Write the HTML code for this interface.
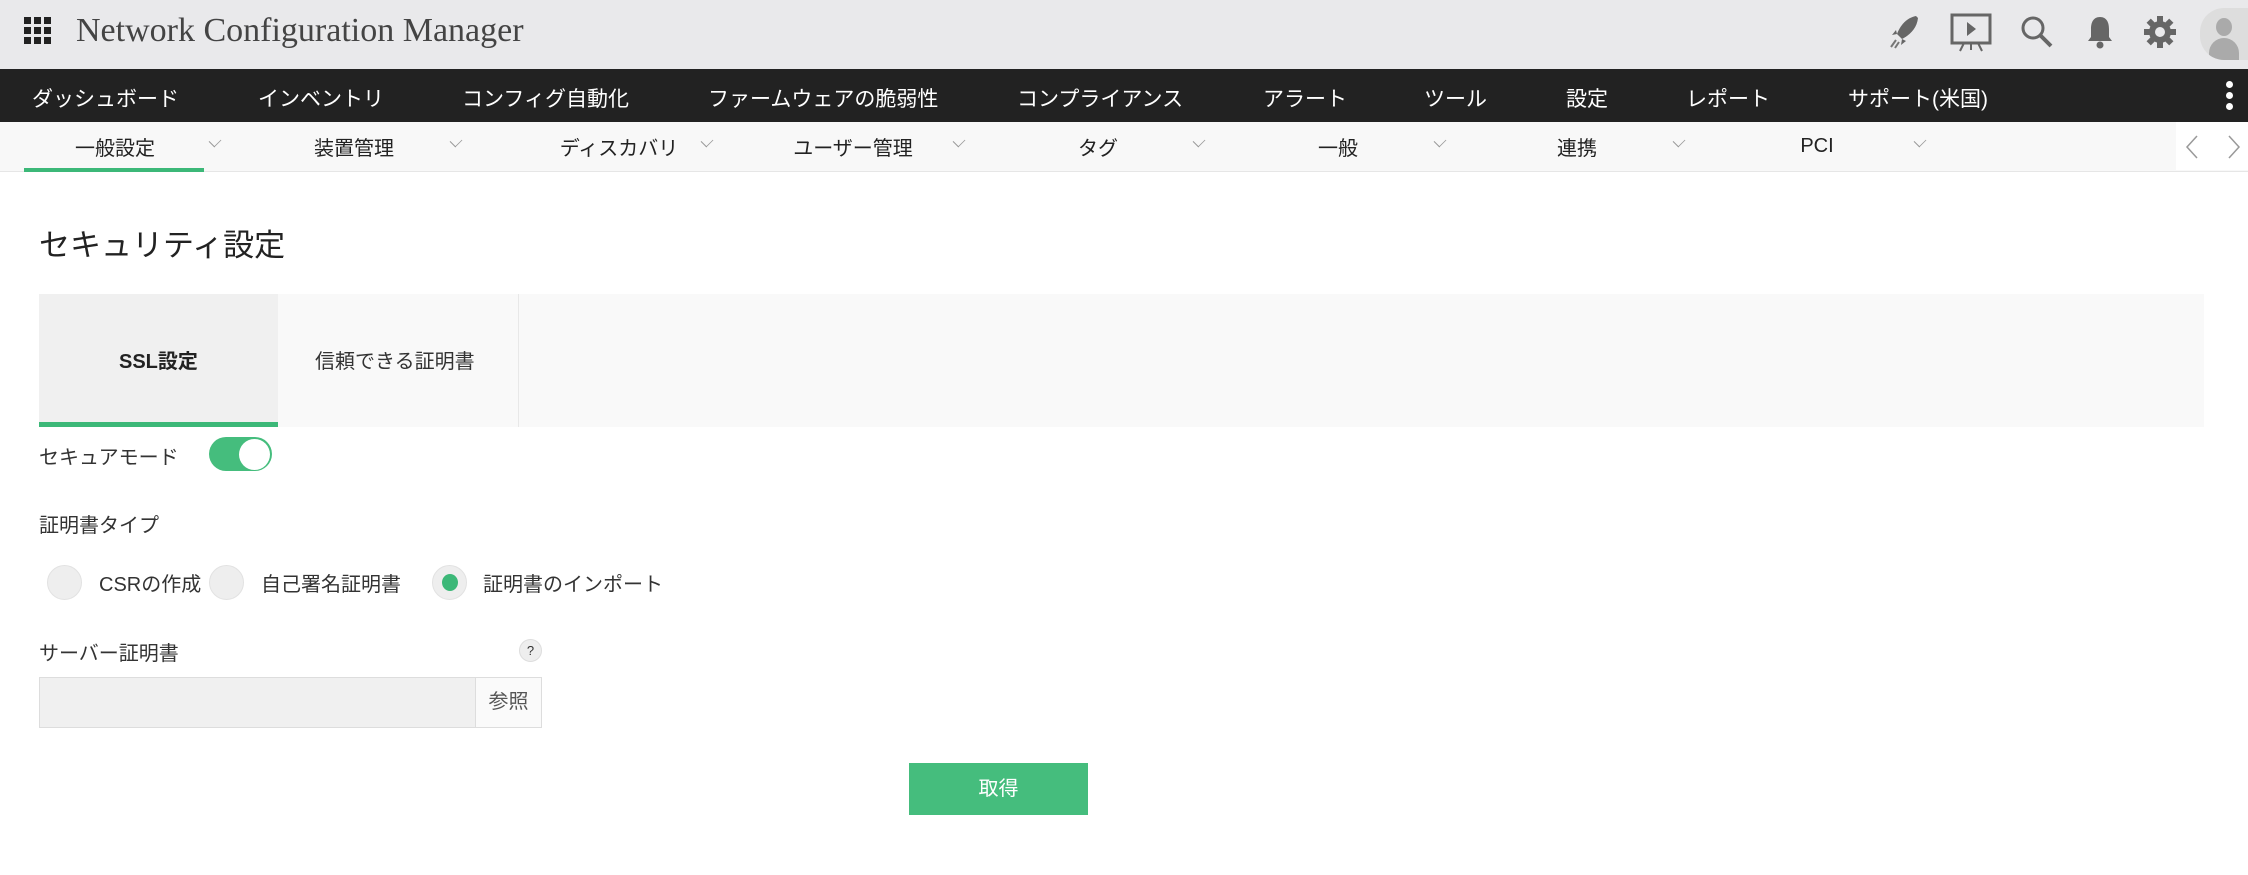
<!DOCTYPE html>
<html><head><meta charset="utf-8"><style>
*{margin:0;padding:0;box-sizing:border-box}
body{width:2248px;height:875px;overflow:hidden;background:#fff;font-family:"Liberation Sans","Noto Sans CJK JP",sans-serif;color:#333;position:relative}
.a{position:absolute;white-space:nowrap}
#top{position:absolute;left:0;top:0;width:2248px;height:69px;background:#e9e9eb}
#nav{position:absolute;left:0;top:69px;width:2248px;height:53px;background:#222}
#nav span{position:absolute;top:14px;color:#fff;font-size:21px}
#sub{position:absolute;left:0;top:122px;width:2248px;height:50px;background:#f8f8f8;border-bottom:1px solid #e6e6e6}
#sub .t{position:absolute;top:10px;font-size:20px;color:#222;transform:translateX(-50%)}
#sub .c{position:absolute;top:14px;width:10px;height:10px;border-right:1px solid #999;border-bottom:1px solid #999;transform:rotate(45deg) scale(.8,1)}
.rad{position:absolute;width:35px;height:35px;border-radius:50%;background:#eee;border:1px solid #e2e2e2}
</style></head><body>
<div id="top">
 <svg class="a" style="left:24px;top:17px" width="28" height="28"><g fill="#222"><rect x="0" y="0" width="7" height="7"/><rect x="10" y="0" width="7" height="7"/><rect x="20" y="0" width="7" height="7"/><rect x="0" y="10" width="7" height="7"/><rect x="10" y="10" width="7" height="7"/><rect x="20" y="10" width="7" height="7"/><rect x="0" y="20" width="7" height="7"/><rect x="10" y="20" width="7" height="7"/><rect x="20" y="20" width="7" height="7"/></g></svg>
 <div class="a" style="left:76px;top:12px;font-family:'Liberation Serif',serif;font-size:34px;color:#444">Network Configuration Manager</div>
 <svg class="a" style="left:1888px;top:14px" width="32" height="36" viewBox="0 0 32 36"><path d="M28 2 C18 4 12 12 9 20 L14 25 C22 21 29 14 30 4Z" fill="#666"/><path d="M9 20 L4 21 L8 16Z M14 25 L13 31 L18 27Z" fill="#666"/><path d="M8 26 L3 33 M11 28 L7 34" stroke="#777" stroke-width="2"/></svg>
 <svg class="a" style="left:1950px;top:12px" width="42" height="40" viewBox="0 0 42 40"><rect x="2" y="3" width="38" height="28" fill="none" stroke="#666" stroke-width="3"/><path d="M17 10 L26 17 L17 24Z" fill="#666"/><path d="M14 31 L10 39 M28 31 L32 39 M21 31 V38" stroke="#666" stroke-width="2"/></svg>
 <svg class="a" style="left:2020px;top:15px" width="34" height="34" viewBox="0 0 34 34"><circle cx="13" cy="13" r="10" fill="none" stroke="#666" stroke-width="3"/><path d="M20 20 L31 31" stroke="#666" stroke-width="4"/></svg>
 <svg class="a" style="left:2085px;top:14px" width="30" height="36" viewBox="0 0 30 36"><path d="M15 3 C8 3 6 9 6 15 V23 L3 27 H27 L24 23 V15 C24 9 22 3 15 3Z" fill="#666"/><circle cx="15" cy="31" r="3.5" fill="#666"/></svg>
 <svg class="a" style="left:2143px;top:15px" width="34" height="34" viewBox="0 0 34 34"><g fill="#666"><circle cx="17" cy="17" r="11"/><rect x="14" y="1" width="6" height="32"/><rect x="1" y="14" width="32" height="6"/><rect x="14" y="1" width="6" height="32" transform="rotate(45 17 17)"/><rect x="14" y="1" width="6" height="32" transform="rotate(-45 17 17)"/></g><circle cx="17" cy="17" r="5" fill="#e9e9eb"/></svg>
 <div class="a" style="left:2200px;top:8px;width:48px;height:52px;border-radius:24px 0 0 24px;background:#ddd;overflow:hidden"><div class="a" style="left:16px;top:10px;width:16px;height:18px;border-radius:50%;background:#aaa"></div><div class="a" style="left:9px;top:30px;width:30px;height:24px;border-radius:15px 15px 0 0;background:#aaa"></div></div>
</div>
<div id="nav">
 <span style="left:32px">ダッシュボード</span><span style="left:258px">インベントリ</span><span style="left:462px">コンフィグ自動化</span><span style="left:708px">ファームウェアの脆弱性</span><span style="left:1017px">コンプライアンス</span><span style="left:1263px">アラート</span><span style="left:1424px">ツール</span><span style="left:1566px">設定</span><span style="left:1686px">レポート</span><span style="left:1848px">サポート(米国)</span>
 <div class="a" style="left:2226px;top:12px;width:7px;height:7px;border-radius:50%;background:#fff"></div><div class="a" style="left:2226px;top:23px;width:7px;height:7px;border-radius:50%;background:#fff"></div><div class="a" style="left:2226px;top:34px;width:7px;height:7px;border-radius:50%;background:#fff"></div>
</div>
<div id="sub">
 <span class="t" style="left:115px">一般設定</span><i class="c" style="left:210px"></i>
 <span class="t" style="left:354px">装置管理</span><i class="c" style="left:451px"></i>
 <span class="t" style="left:619px">ディスカバリ</span><i class="c" style="left:702px"></i>
 <span class="t" style="left:853px">ユーザー管理</span><i class="c" style="left:954px"></i>
 <span class="t" style="left:1098px">タグ</span><i class="c" style="left:1194px"></i>
 <span class="t" style="left:1338px">一般</span><i class="c" style="left:1435px"></i>
 <span class="t" style="left:1577px">連携</span><i class="c" style="left:1674px"></i>
 <span class="t" style="left:1817px;top:13px">PCI</span><i class="c" style="left:1915px"></i>
 <div class="a" style="left:24px;top:46px;width:180px;height:4px;background:#3cb878"></div>
 <div class="a" style="left:2176px;top:0;width:72px;height:48px;background:#fff"></div>
 <svg class="a" style="left:2183px;top:12px" width="60" height="26"><path d="M14 2 L4 13 L14 24 M46 2 L56 13 L46 24" fill="none" stroke="#999" stroke-width="1.5"/></svg>
</div>
<div class="a" style="left:39px;top:220px;font-size:31px;color:#222">セキュリティ設定</div>
<div class="a" style="left:39px;top:294px;width:2165px;height:133px;background:#f9f9f9"></div>
<div class="a" style="left:39px;top:294px;width:239px;height:133px;background:#f0f0f0;border-bottom:5px solid #3cb878"></div>
<div class="a" style="left:518px;top:294px;width:1px;height:133px;background:#e8e8e8"></div>
<div class="a" style="left:119px;top:345px;font-size:20px;color:#222;font-weight:600">SSL設定</div>
<div class="a" style="left:315px;top:345px;font-size:20px;color:#333">信頼できる証明書</div>
<div class="a" style="left:39px;top:441px;font-size:20px">セキュアモード</div>
<div class="a" style="left:209px;top:437px;width:63px;height:34px;border-radius:17px;background:#45bd7d"></div>
<div class="a" style="left:239px;top:439px;width:31px;height:31px;border-radius:50%;background:#fff"></div>
<div class="a" style="left:39px;top:509px;font-size:20px">証明書タイプ</div>
<div class="rad" style="left:47px;top:565px"></div>
<div class="a" style="left:99px;top:568px;font-size:20px">CSRの作成</div>
<div class="rad" style="left:209px;top:565px"></div>
<div class="a" style="left:261px;top:568px;font-size:20px">自己署名証明書</div>
<div class="rad" style="left:432px;top:565px"><div class="a" style="left:9px;top:8px;width:16px;height:17px;border-radius:50%;background:#3cb878"></div></div>
<div class="a" style="left:483px;top:568px;font-size:20px">証明書のインポート</div>
<div class="a" style="left:39px;top:637px;font-size:20px">サーバー証明書</div>
<div class="a" style="left:519px;top:639px;width:23px;height:23px;border-radius:50%;background:#eee;border:1px solid #ddd;font-size:13px;text-align:center;line-height:21px">?</div>
<div class="a" style="left:39px;top:677px;width:503px;height:51px;background:#f0f0f0;border:1px solid #ddd"></div>
<div class="a" style="left:475px;top:677px;width:67px;height:51px;background:#fafafa;border:1px solid #ddd;font-size:20px;color:#555;text-align:center;line-height:49px">参照</div>
<div class="a" style="left:909px;top:763px;width:179px;height:52px;background:#45bd7d;color:#fff;font-size:20px;text-align:center;line-height:52px">取得</div>
</body></html>
